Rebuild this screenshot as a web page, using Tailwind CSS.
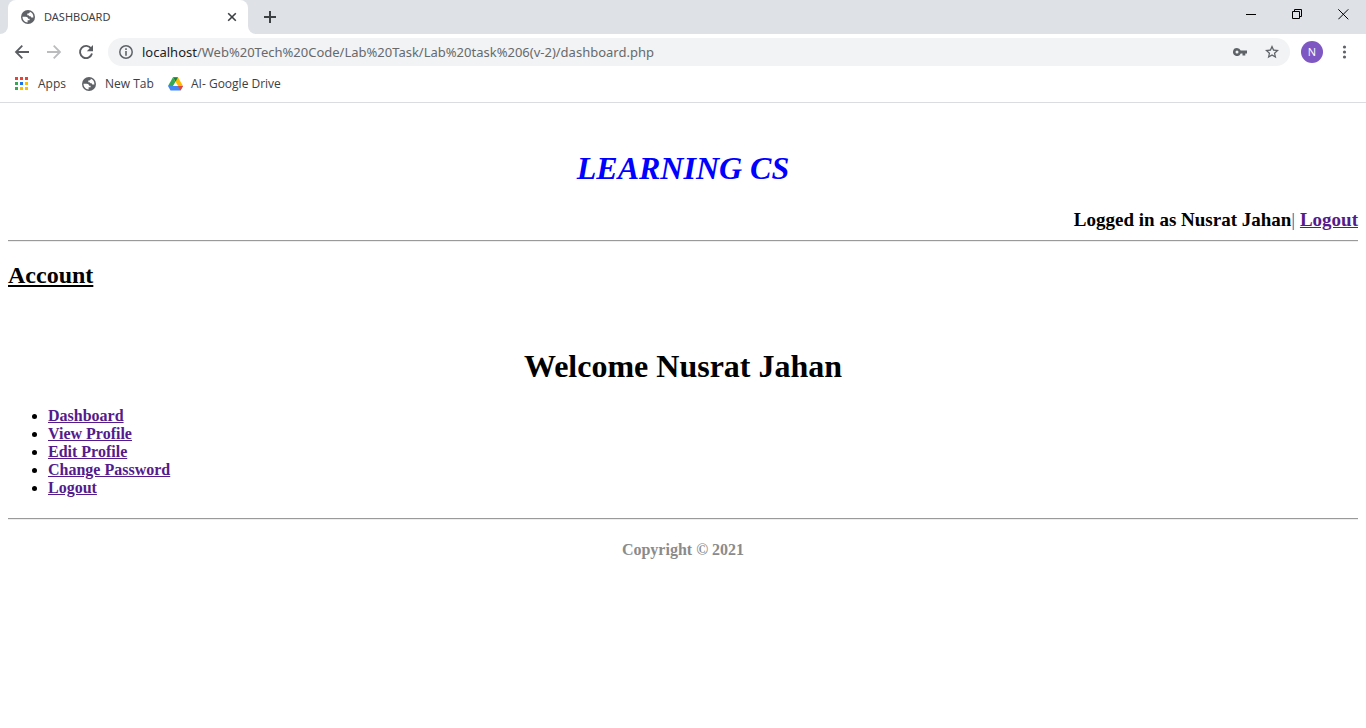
<!DOCTYPE html>
<html lang="en">
<head>
<meta charset="utf-8">
<meta name="viewport" content="width=device-width, initial-scale=1">
<title>DASHBOARD</title>
<script src="https://cdn.jsdelivr.net/npm/@tailwindcss/browser@4"></script>
</head>
<body class="bg-white text-black">
<svg class="hidden" aria-hidden="true">
  <symbol id="globe" viewBox="0 0 14 14">
    <circle cx="7" cy="7" r="7" fill="#5f6368"/>
    <path d="M1.500 6.800H4.800C6.200 6.900 7 7.600 7.100 8.700H8.600V10.200H6.600V12.500C3.900 12.500 1.500 10 1.500 6.800Z" fill="#fff"/>
    <path d="M8.700 1.800V2.700L7.400 3.600H6.300V5.200H7.600L8.400 6.300H9.600L10.300 7.600H12.400C12.700 4.800 11 2.500 8.700 1.800Z" fill="#fff"/>
  </symbol>
</svg>

<header class="font-['Open_Sans','Noto_Sans',sans-serif] text-xs text-[#3c4043]">
  <div class="flex h-[34px] items-stretch bg-[#dee1e6]">
    <div class="flex w-2 items-end bg-white"><span class="h-full w-2 rounded-br-lg bg-[#dee1e6]"></span></div>
    <div class="flex w-60 items-center rounded-t-lg bg-white pr-[11px] pl-[13px]">
      <svg class="size-[14px] shrink-0"><use href="#globe"/></svg>
      <span class="ml-[9px] flex-1 font-['Noto_Sans',sans-serif] text-[11px] leading-4">DASHBOARD</span>
      <button type="button" aria-label="Close tab"><svg class="size-[10px]" viewBox="0 0 10 10" fill="none" stroke="#3c4043" stroke-width="1.6"><path d="M1.200 1.200 8.800 8.800M8.800 1.200 1.200 8.800"/></svg></button>
    </div>
    <div class="flex w-2 items-end bg-white"><span class="h-full w-2 rounded-bl-lg bg-[#dee1e6]"></span></div>
    <button type="button" aria-label="New tab" class="ml-2"><svg class="size-3" viewBox="0 0 12 12" stroke="#3c4043" stroke-width="2"><path d="M0 6H12M6 0V12"/></svg></button>
    <div class="ml-auto flex pb-[6px]">
      <button type="button" aria-label="Minimize" class="flex w-[46px] items-center justify-center"><svg class="size-[11px]" viewBox="0 0 11 11"><path d="M0 5.500H10" stroke="#000"/></svg></button>
      <button type="button" aria-label="Restore" class="flex w-[46px] items-center justify-center"><svg class="size-[11px]" viewBox="0 0 11 11" fill="none" stroke="#000"><path d="M.5 2.500H7.500V9.500H.5ZM2.500 2.500V.5H9.500V7.500H7.500"/></svg></button>
      <button type="button" aria-label="Close window" class="flex w-[46px] items-center justify-center"><svg class="size-[11px]" viewBox="0 0 11 11" fill="none" stroke="#000"><path d="M.3.3 10.300 10.300M10.300.3.3 10.300"/></svg></button>
    </div>
  </div>

  <div class="flex h-9 items-center pr-[14px] pl-[14px]">
    <button type="button" aria-label="Back"><svg class="size-4" viewBox="0 0 16 16" fill="none" stroke="#5a5e63" stroke-width="1.800"><path d="M15 8H2M8.300 1.700 2 8 8.300 14.300"/></svg></button>
    <button type="button" aria-label="Forward" class="ml-4"><svg class="size-4" viewBox="0 0 16 16" fill="none" stroke="#babcbe" stroke-width="1.800"><path d="M1 8H14M7.700 1.700 14 8 7.700 14.300"/></svg></button>
    <button type="button" aria-label="Reload" class="ml-4"><svg class="size-4" viewBox="0 0 16 16"><path d="M13.200 4.600A6.100 6.100 0 1 0 14 9.600" fill="none" stroke="#5a5e63" stroke-width="1.900"/><path d="M15 1V7.200H8.800Z" fill="#5a5e63"/></svg></button>
    <div class="ml-[14px] flex h-7 flex-1 items-center rounded-full bg-[#f1f3f4] pr-[10px] pl-[11px]">
      <button type="button" aria-label="Site information"><svg class="size-[14px]" viewBox="0 0 14 14"><circle cx="7" cy="7" r="6.200" fill="none" stroke="#5f6368" stroke-width="1.500"/><path d="M6.200 3.300H7.800V4.900H6.200ZM6.200 6H7.800V10.700H6.200Z" fill="#5f6368"/></svg></button>
      <div role="textbox" aria-label="Address" class="ml-[9px] flex-1 font-['Noto_Sans',sans-serif] text-[13px] leading-5 text-[#67696c]"><span class="text-[#202124]">localhost</span>/Web%20Tech%20Code/Lab%20Task/Lab%20task%206(v-2)/dashboard.php</div>
      <button type="button" aria-label="Saved passwords"><svg class="h-2 w-[14px]" viewBox="0 0 14 8" fill="#5f6368"><path fill-rule="evenodd" d="M4 0A4 4 0 1 0 7.700 5.400H9.500V7.600H12.300V5.400H14V2.600H7.700A4 4 0 0 0 4 0ZM4 2.500A1.500 1.500 0 1 1 4 5.500A1.500 1.500 0 0 1 4 2.500Z"/></svg></button>
      <button type="button" aria-label="Bookmark this page" class="ml-[17px]"><svg class="size-4" viewBox="0 0 24 24" fill="#5f6368"><path d="M22.500 9.100 15 8.400 12 1.500 9 8.400 1.500 9.100 7.200 14.100 5.500 21.500 12 17.600 18.500 21.500 16.800 14.100ZM12 15.500 8.200 17.800 9.200 13.500 5.900 10.600 10.300 10.200 12 6.200 13.700 10.200 18.100 10.600 14.800 13.500 15.800 17.800Z"/></svg></button>
    </div>
    <button type="button" aria-label="Profile" class="ml-[11px] size-[22px] rounded-full bg-[#7e57c2] text-[11px] leading-[22px] text-white">N</button>
    <button type="button" aria-label="Menu" class="ml-[13px]"><svg class="h-[14px] w-4" viewBox="0 0 16 14" fill="#5f6368"><circle cx="8.500" cy="2" r="1.600"/><circle cx="8.500" cy="7" r="1.600"/><circle cx="8.500" cy="12" r="1.600"/></svg></button>
  </div>

  <nav aria-label="Bookmarks" class="flex h-[33px] items-center border-b border-[#dadce0] pb-1 pl-[14px]">
    <a href="#" class="flex w-[68px] items-center gap-[10px]">
      <svg class="size-[14px] shrink-0" viewBox="0 0 14 14"><path d="M1 0h3v3H1zM6 0h3v3H6zM11 0h3v3h-3z" fill="#ea4335"/><path d="M1 5h3v3H1zM1 10h3v3H1z" fill="#34a853"/><path d="M6 5h3v3H6z" fill="#1a73e8"/><path d="M11 5h3v3h-3zM6 10h3v3H6zM11 10h3v3h-3z" fill="#fbbc04"/></svg>Apps</a>
    <a href="#" class="flex w-[86px] items-center gap-[9px]"><svg class="size-[14px] shrink-0"><use href="#globe"/></svg>New Tab</a>
    <a href="#" class="flex items-center gap-2">
      <svg class="h-[14px] w-[15px] shrink-0" viewBox="0 0 15 14"><path d="M5 .3H10L15 9H10Z" fill="#ffba00"/><path d="M5 .3H10L7.500 4.700Z" fill="#188038"/><path d="M0 9 5 .3 7.500 4.700 5 9Z" fill="#34a853"/><path d="M0 9H15L12.500 13.500H2.500Z" fill="#4285f4"/><path d="M10 9H15L12.500 13.500Z" fill="#ea4335"/></svg>AI- Google Drive</a>
  </nav>
</header>

<main class="px-2 pt-[47px] font-['Liberation_Serif',serif] font-bold">
  <h1 class="text-center text-[32px] leading-9 text-[#0000ff] italic">LEARNING CS</h1>
  <p class="mt-[23px] text-right text-[19px] leading-[21px]">Logged in as Nusrat Jahan<span class="font-normal text-[#0073b0]">|</span> <a href="#" class="text-[#551a8b] underline">Logout</a></p>
  <hr class="mt-[10px] h-[2px] border-t border-b border-t-[#9a9a9a] border-b-[#eeeeee]">
  <h2 class="mt-[19px] text-2xl leading-7 underline">Account</h2>
  <h1 class="mt-[59px] text-center text-[32px] leading-9">Welcome Nusrat Jahan</h1>
  <ul class="mt-[23px] list-disc pl-10 text-base leading-[18px]">
    <li><a href="#" class="text-[#551a8b] underline">Dashboard</a></li>
    <li><a href="#" class="text-[#551a8b] underline">View Profile</a></li>
    <li><a href="#" class="text-[#551a8b] underline">Edit Profile</a></li>
    <li><a href="#" class="text-[#551a8b] underline">Change Password</a></li>
    <li><a href="#" class="text-[#551a8b] underline">Logout</a></li>
  </ul>
  <hr class="mt-[21px] h-[2px] border-t border-b border-t-[#9a9a9a] border-b-[#eeeeee]">
  <footer class="mt-[21px] text-center text-base leading-[18px] text-[#8b8b8b]">Copyright © 2021</footer>
</main>
</body>
</html>
